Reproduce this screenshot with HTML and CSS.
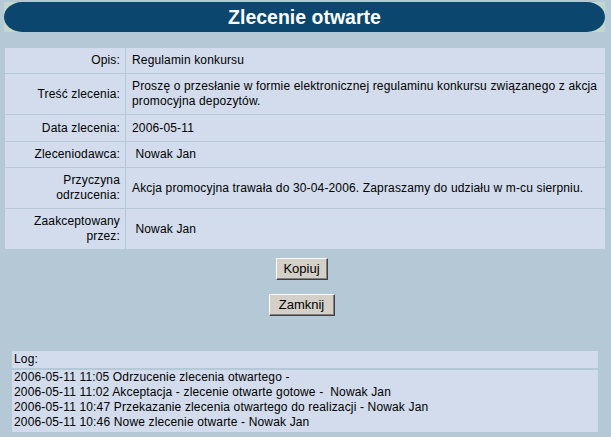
FILE: index.html
```html
<!DOCTYPE html>
<html lang="pl">
<head>
<meta charset="utf-8">
<title>Zlecenie otwarte</title>
<link rel="stylesheet" href="styles.css">
</head>
<body>
<div class="page">
  <div class="title-wrap"><h1 class="title">Zlecenie otwarte</h1></div>

  <table class="details">
    <tr class="row-single">
      <th class="label">Opis:</th>
      <td class="value">Regulamin konkursu</td>
    </tr>
    <tr>
      <th class="label">Treść zlecenia:</th>
      <td class="value">Proszę o przesłanie w formie elektronicznej regulaminu konkursu związanego z akcja promocyjna depozytów.</td>
    </tr>
    <tr class="row-single row-tall">
      <th class="label">Data zlecenia:</th>
      <td class="value">2006-05-11</td>
    </tr>
    <tr class="row-single">
      <th class="label">Zleceniodawca:</th>
      <td class="value">&nbsp;Nowak Jan</td>
    </tr>
    <tr>
      <th class="label">Przyczyna odrzucenia:</th>
      <td class="value">Akcja promocyjna trawała do 30-04-2006. Zapraszamy do udziału w m-cu sierpniu.</td>
    </tr>
    <tr>
      <th class="label">Zaakceptowany przez:</th>
      <td class="value">&nbsp;Nowak Jan</td>
    </tr>
  </table>

  <div class="actions">
    <button class="btn btn-copy" type="button">Kopiuj</button>
    <button class="btn btn-close" type="button">Zamknij</button>
  </div>

  <div class="log">
    <div class="log-head">Log:</div>
    <div class="log-body">
      <div>2006-05-11 11:05 Odrzucenie zlecenia otwartego -</div>
      <div>2006-05-11 11:02 Akceptacja - zlecenie otwarte gotowe - &nbsp;Nowak Jan</div>
      <div>2006-05-11 10:47 Przekazanie zlecenia otwartego do realizacji - Nowak Jan</div>
      <div>2006-05-11 10:46 Nowe zlecenie otwarte - Nowak Jan</div>
    </div>
  </div>
</div>
</body>
</html>
```

FILE: styles.css
```css
html, body {
  margin: 0;
  padding: 0;
  background: #b5c8d6;
}

body {
  font-family: "Liberation Sans", Arial, sans-serif;
  font-size: 12px;
  letter-spacing: 0.15px;
  color: #000;
  width: 611px;
  height: 437px;
  overflow: hidden;
}

.page {
  padding-top: 2px;
}

.title-wrap {
  margin: 0 6px 0 4px;
  height: 30px;
  background: #c3d7cd;
}

.title {
  margin: 0;
  height: 30px;
  background: #0b466f;
  border-radius: 18px / 15px;
  color: #fff;
  font-size: 19.5px;
  font-weight: bold;
  letter-spacing: 0;
  line-height: 30px;
  text-align: center;
}

.details {
  margin: 15px 0 0 4px;
  width: 602px;
  border-collapse: separate;
  border-spacing: 1px;
}

.details th,
.details td {
  background: #d2dcec;
  padding: 5px 6px;
  line-height: 15px;
  vertical-align: middle;
  font-weight: normal;
}

.details .label {
  width: 109px;
  text-align: right;
  padding-right: 5px;
}

.details .value {
  text-align: left;
  padding-left: 6px;
}

.details .row-tall th,
.details .row-tall td {
  padding-top: 6px;
}

.actions {
  display: flex;
  flex-direction: column;
  align-items: center;
  gap: 14px;
  padding: 8px 8px 0 0;
}

.btn {
  font-family: "Liberation Sans", Arial, sans-serif;
  font-size: 13px;
  letter-spacing: 0;
  color: #000;
  background: #d4d0c8;
  height: 22px;
  padding: 0;
  border-style: solid;
  border-width: 1px;
  border-color: #ffffff #404040 #404040 #ffffff;
  box-shadow: inset -1px -1px 0 #808080;
  border-radius: 0;
  line-height: 18px;
}

.btn-copy {
  width: 52px;
}

.btn-close {
  width: 66px;
}

.log {
  margin: 35px 13px 0 12px;
  display: flex;
  flex-direction: column;
  gap: 2px;
}

.log-head {
  background: #d2dcec;
  height: 17px;
  line-height: 17px;
  padding-left: 2px;
}

.log-body {
  background: #d2dcec;
  padding: 0 0 2px 2px;
  line-height: 15px;
}
```
